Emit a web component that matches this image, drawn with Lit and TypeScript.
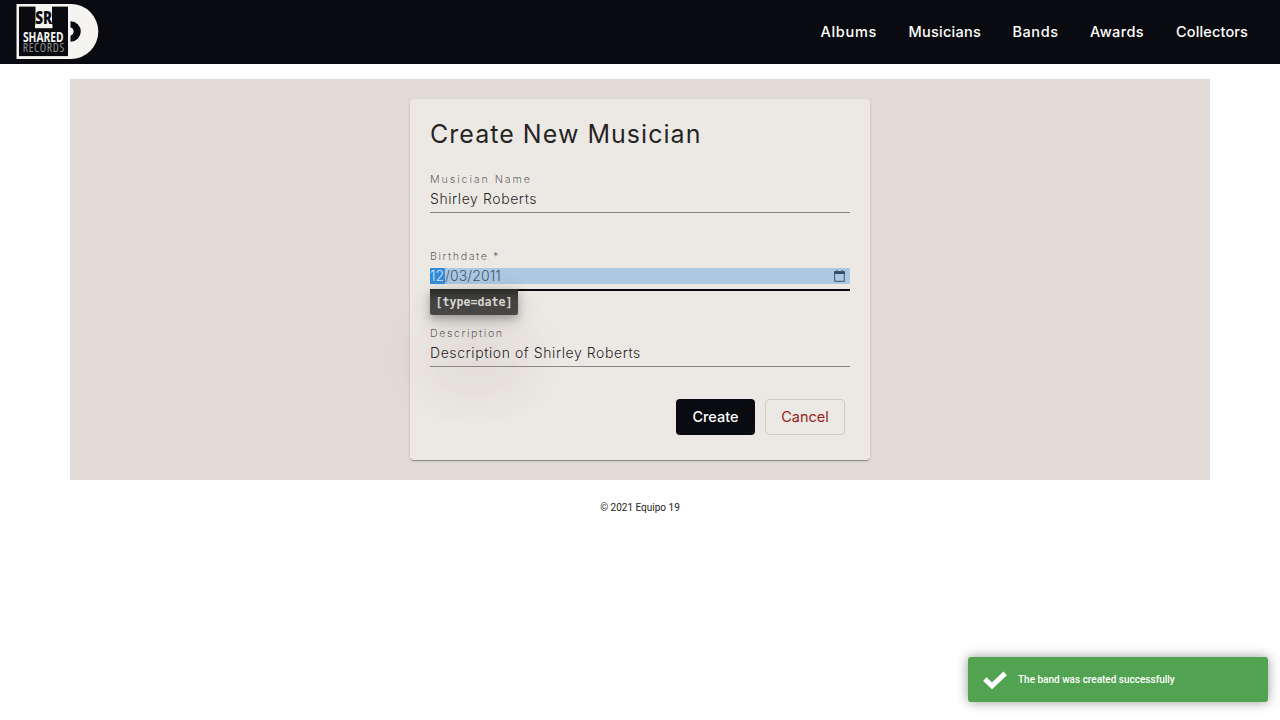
import { LitElement, html, css, svg } from "lit";
import { customElement } from "lit/decorators.js";

const logo = svg`
  <circle cx="54.8" cy="27.5" r="27.5" fill="#f5f4f0"/>
  <rect x="0.5" y="0" width="56" height="55" fill="#f5f4f0"/>
  <path d="M54.5 17.2a10.3 10.3 0 0 1 0 20.6v-6.4a4 4 0 0 0 0-7.8z" fill="#0a0b10"/>
  <rect x="3" y="2.6" width="49" height="49.5" fill="#0a0b10"/>
  <rect x="19.5" y="1" width="16.5" height="23" fill="#f5f4f0"/>
  <rect x="19" y="20.5" width="17.5" height="3.7" fill="#f5f4f0"/>
  <text x="19.2" y="19.6" font-size="17" font-weight="800" textLength="17" lengthAdjust="spacingAndGlyphs" fill="#0a0b10">SR</text>
  <text x="7" y="38" font-size="15" font-weight="700" textLength="40.5" lengthAdjust="spacingAndGlyphs" fill="#f5f4f0">SHARED</text>
  <text x="6.8" y="48.3" font-size="11.8" textLength="41.5" fill="#8f8f8f" lengthAdjust="spacing" font-family="Open Sans" style="font-stretch:75%">RECORDS</text>`;

@customElement("app-root")
export class AppRoot extends LitElement {
  static styles = css`
    :host { display: block; min-height: 720px; position: relative; overflow: hidden; background: #fff; font-family: Inter, sans-serif; color: rgba(0,0,0,.87); }
    * { box-sizing: border-box; }
    header { height: 64px; background: #0a0b10; display: flex; justify-content: space-between; align-items: center; padding: 0 32px 0 16px; }
    .logo { width: 83px; height: 56px; display: block; font-family: "Open Sans", sans-serif; }
    nav { display: flex; gap: 32px; font-size: 14.5px; font-weight: 500; color: #fff; line-height: 20px; white-space: nowrap; }
    .albums { width: 56px; letter-spacing: .7px; }
    .musicians { width: 72px; letter-spacing: .25px; }
    .bands { width: 45.5px; letter-spacing: .55px; }
    .awards { width: 54px; letter-spacing: .4px; }
    .collectors { width: 72px; letter-spacing: .15px; }
    main { width: 1140px; height: 401px; margin: 15px auto 0; padding-top: 20px; background: #e0dbd5; }
    .card { width: 460px; height: 361px; margin: 0 auto; padding: 20px; border-radius: 4px; background: #ece8e3; box-shadow: 0 2px 1px -1px rgba(0,0,0,.2), 0 1px 1px rgba(0,0,0,.14), 0 1px 3px rgba(0,0,0,.12); }
    h1 { margin: 0 0 22px; font-size: 25px; line-height: 30px; font-weight: 400; letter-spacing: 1.03px; white-space: nowrap; }
    .field { height: 77px; position: relative; }
    .label { height: 16px; padding-top: 1px; line-height: 16px; font-size: 10.7px; letter-spacing: 1.55px; color: rgba(0,0,0,.62); font-weight: 300; }
    .label.wide { letter-spacing: 1.9px; }
    .value { height: 16px; margin-top: 4px; line-height: 16px; font-size: 14px; font-weight: 300; letter-spacing: .58px; display: flex; align-items: center; white-space: nowrap; }
    .line { height: 1px; margin-top: 5px; background: #8c8587; }
    .date { background: #adc8e2; color: #3c5874; letter-spacing: .1px; }
    .month { background: #338cda; color: #d5e5f3; width: 15px; }
    .date svg { width: 11px; height: 12px; margin: 0 5px 0 auto; }
    .focus .line { height: 2px; background: #0a0b10; }
    .tip { position: absolute; left: 0; top: 41px; width: 88px; height: 26px; border-radius: 0 0 2px 2px; background: linear-gradient(#292928, #444341 45%, #484745); color: #d5d4d2; font: 700 11.6px/26px "DejaVu Sans Mono", monospace; text-align: center; box-shadow: 0 4px 8px rgba(0,0,0,.26), 0 4px 24px rgba(0,0,0,.14), 0 55px 60px rgba(60,40,40,.13), 0 60px 80px 5px rgba(0,0,0,.04); }
    .actions { display: flex; gap: 10px; justify-content: flex-end; padding-right: 5px; margin-top: -3px; }
    button { height: 36px; padding: 0 0 2px; border: 0; border-radius: 4px; font: 500 14.5px Inter, sans-serif; }
    .create { width: 79px; background: #0a0b10; color: #fff; }
    .cancel { width: 80px; background: transparent; border: 1px solid #d0ccc8; color: #961f22; font-weight: 400; }
    footer { margin-top: 20px; height: 16px; text-align: center; font: 400 10px/16px Roboto, sans-serif; color: #222; }
    .toast { position: absolute; right: 12px; bottom: 18px; width: 300px; height: 45px; display: flex; align-items: center; gap: 11px; padding-left: 15px; border-radius: 3px; background: #51a351; box-shadow: 0 0 12px #999; color: #fff; font: 500 10px/15px Roboto, sans-serif; }
    .toast svg { width: 24px; height: 20px; }
  `;

  render() {
    return html`
      <header>
        <svg class="logo" viewBox="0 0 83 56">${logo}</svg>
        <nav>
          <span class="albums">Albums</span><span class="musicians">Musicians</span><span class="bands">Bands</span><span class="awards">Awards</span><span class="collectors">Collectors</span>
        </nav>
      </header>
      <main>
        <section class="card">
          <h1>Create New Musician</h1>
          <div class="field">
            <div class="label wide">Musician Name</div>
            <div class="value">Shirley Roberts</div>
            <div class="line"></div>
          </div>
          <div class="field focus">
            <div class="label">Birthdate *</div>
            <div class="value date"><span class="month">12</span><span>/03/2011</span>
              <svg viewBox="0 0 11 12"><path d="M2 0h1.5v1h4V0H9v1h1a1 1 0 0 1 1 1v9a1 1 0 0 1-1 1H1a1 1 0 0 1-1-1V2a1 1 0 0 1 1-1h1zM1.2 4v6.8h8.6V4z" fill="#4b6884"/><path d="M0 1.5h11V4H0z" fill="#2f4d69"/></svg>
            </div>
            <div class="line"></div>
            <div class="tip">[type=date]</div>
          </div>
          <div class="field">
            <div class="label">Description</div>
            <div class="value">Description of Shirley Roberts</div>
            <div class="line"></div>
          </div>
          <div class="actions">
            <button class="create">Create</button><button class="cancel">Cancel</button>
          </div>
        </section>
      </main>
      <footer>© 2021 Equipo 19</footer>
      <div class="toast">
        <svg viewBox="0 0 24 20"><path d="M1.8 9.2 9 15.8 22.2 3.4" fill="none" stroke="#fff" stroke-width="5"/></svg>
        <span>The band was created successfully</span>
      </div>
    `;
  }
}
